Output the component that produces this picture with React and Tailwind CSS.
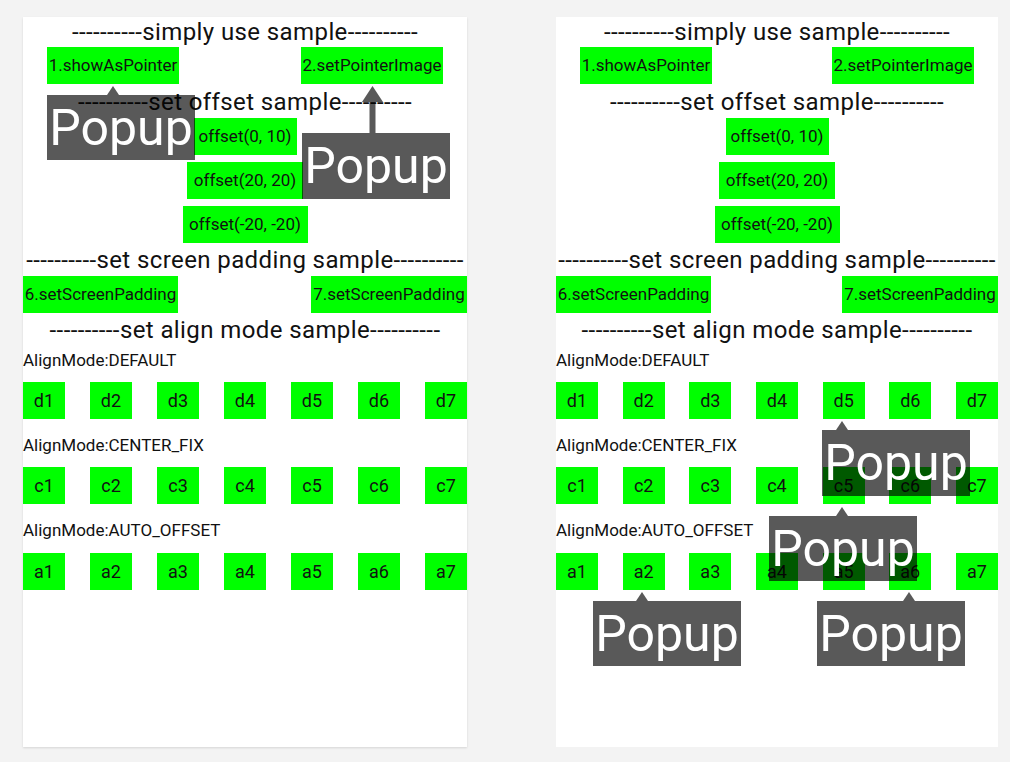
import React from "react"

const Title = ({ className = "", children }) => (
  <div className={`text-center text-[24px] tracking-[0.4px] text-[#111] whitespace-nowrap ${className}`}>{children}</div>
)

const Btn = ({ className = "", children }) => (
  <div className={`h-[37px] bg-[#00ff00] flex items-center justify-center text-[17px] text-[#111] whitespace-nowrap ${className}`}>
    {children}
  </div>
)

const Label = ({ className = "", children }) => (
  <div className={`text-[17px] leading-[28px] text-[#111] ${className}`}>{children}</div>
)

const Row = ({ prefix }) => (
  <div className="flex justify-between">
    {[1, 2, 3, 4, 5, 6, 7].map((n) => (
      <div key={n} className="w-[42px] h-[37px] bg-[#00ff00] flex items-center justify-center text-[18px] text-[#111]">
        {prefix}{n}
      </div>
    ))}
  </div>
)

const Tip = ({ className }) => (
  <svg width="12" height="9" viewBox="0 0 12 9" className={`absolute top-[-9px] ${className}`}>
    <polygon points="6,0 12,9 0,9" fill="#000" fillOpacity="0.65" />
  </svg>
)

const Popup = ({ className, tip }) => (
  <div className={`absolute w-[148px] h-[65px] bg-black/65 ${className}`}>
    {tip && <Tip className={tip} />}
    <div className="text-center text-white text-[50px] leading-[67px]">Popup</div>
  </div>
)

const Panel = ({ className = "", children }) => (
  <div className={`relative h-[730px] bg-white flex flex-col ${className}`}>
    <Title className="leading-[30px]">----------simply use sample----------</Title>
    <div className="flex justify-between px-[24px]">
      <Btn className="w-[132px]">1.showAsPointer</Btn>
      <Btn className="w-[142px]">2.setPointerImage</Btn>
    </div>
    <Title className="pt-[3px] leading-[31px]">----------set offset sample----------</Title>
    <div className="flex flex-col items-center gap-[7px]">
      <Btn className="w-[103px]">offset(0, 10)</Btn>
      <Btn className="w-[116px]">offset(20, 20)</Btn>
      <Btn className="w-[125px]">offset(-20, -20)</Btn>
    </div>
    <Title className="pt-[1px] leading-[32px]">----------set screen padding sample----------</Title>
    <div className="flex justify-between">
      <Btn className="w-[155px]">6.setScreenPadding</Btn>
      <Btn className="w-[156px]">7.setScreenPadding</Btn>
    </div>
    <Title className="pt-[1px] leading-[32px]">----------set align mode sample----------</Title>
    <Label className="pb-[8px]">AlignMode:DEFAULT</Label>
    <Row prefix="d" />
    <Label className="pt-[12px] pb-[8px]">AlignMode:CENTER_FIX</Label>
    <Row prefix="c" />
    <Label className="pt-[12px] pb-[9px]">AlignMode:AUTO_OFFSET</Label>
    <Row prefix="a" />
    {children}
  </div>
)

export default function App() {
  return (
    <div className="min-h-[762px] w-[1010px] bg-[#f3f3f3] flex gap-[89px] pl-[23px] pt-[17px] font-['Roboto',sans-serif]">
      <Panel className="w-[444px] shadow-[0_1px_2px_rgba(0,0,0,0.12)]">
        <Popup className="left-[24px] top-[78px]" tip="left-[60px]" />
        <svg width="21" height="47" viewBox="0 0 21 47" className="absolute left-[339px] top-[69px]">
          <polygon points="10.5,0 21,16 13.5,16 13.5,47 7.5,47 7.5,16 0,16" fill="#000" fillOpacity="0.65" />
        </svg>
        <Popup className="left-[279px] top-[116px] h-[66px]" />
      </Panel>
      <Panel className="w-[442px]">
        <Popup className="left-[266px] top-[413px] h-[66px]" tip="left-[14px]" />
        <Popup className="left-[213px] top-[499px]" tip="left-[67px]" />
        <Popup className="left-[37px] top-[584px]" tip="left-[43px]" />
        <Popup className="left-[261px] top-[584px]" tip="left-[86px]" />
      </Panel>
    </div>
  )
}
